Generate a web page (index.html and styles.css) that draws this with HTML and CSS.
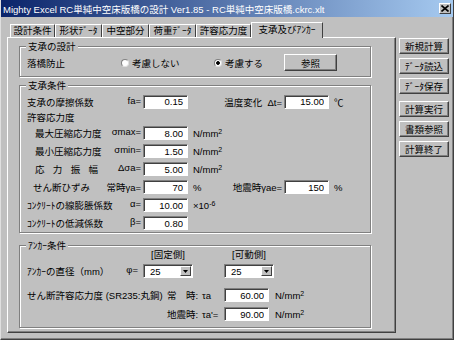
FILE: index.html
```html
<!DOCTYPE html>
<html lang="ja">
<head>
    <meta charset="UTF-8">
    <meta name="viewport" content="width=device-width, initial-scale=1.0">
    <title>Mighty Excel RC単純中空床版橋の設計</title>
    <link rel="stylesheet" href="styles.css">
</head>
<body>
    <div class="window">
        <div class="titlebar">
            <span class="title">Mighty Excel RC単純中空床版橋の設計 Ver1.85 - RC単純中空床版橋.ckrc.xlt</span>
            <span class="close">
                <svg width="8" height="7" viewBox="0 0 8 7"><path d="M0.5 0.5 L7.5 6.5 M7.5 0.5 L0.5 6.5" stroke="#000" stroke-width="1.6"/></svg>
            </span>
        </div>

        <div class="main">
            <div class="tabctl">
                <!-- Tab strip -->
                <div class="tabs">
                    <span class="tab w45">設計条件</span>
                    <span class="tab w47">形状ﾃﾞｰﾀ</span>
                    <span class="tab w47">中空部分</span>
                    <span class="tab w47">荷重ﾃﾞｰﾀ</span>
                    <span class="tab w55">許容応力度</span>
                    <span class="tab active">支承及びｱﾝｶｰ</span>
                </div>

                <div class="page">
                    <!-- 支承の設計 -->
                    <div class="group g1">
                        <div class="group-title">支承の設計</div>
                        <div class="rakkyo">
                            <span class="rk-label">落橋防止</span>
                            <label class="radio r1"><span class="dot"></span>考慮しない</label>
                            <label class="radio r2"><span class="dot on"></span>考慮する</label>
                            <button class="btn ref">参照</button>
                        </div>
                    </div>

                    <!-- 支承条件 -->
                    <div class="group g2">
                        <div class="group-title">支承条件</div>
                        <div class="grid">
                            <div class="k"><span>支承の摩擦係数</span><span>fa=</span></div>
                            <input class="num" type="text" value="0.15">
                            <span></span>
                            <span class="k2">温度変化&nbsp; Δt=</span>
                            <input class="num" type="text" value="15.00">
                            <span class="u2">℃</span>

                            <div class="sub">許容応力度</div>

                            <div class="k in8"><span>最大圧縮応力度</span><span>σmax=</span></div>
                            <input class="num" type="text" value="8.00">
                            <span class="u">N/mm<sup>2</sup></span>
                            <span></span><span></span><span></span>

                            <div class="k in8"><span>最小圧縮応力度</span><span>σmin=</span></div>
                            <input class="num" type="text" value="1.50">
                            <span class="u">N/mm<sup>2</sup></span>
                            <span></span><span></span><span></span>

                            <div class="k in8"><span class="spread">応 力 振 幅</span><span>Δσa=</span></div>
                            <input class="num" type="text" value="5.00">
                            <span class="u">N/mm<sup>2</sup></span>
                            <span></span><span></span><span></span>

                            <div class="k in6"><span>せん断ひずみ</span><span>常時γa=</span></div>
                            <input class="num" type="text" value="70">
                            <span class="u">%</span>
                            <span class="k2">地震時γae=</span>
                            <input class="num" type="text" value="150">
                            <span class="u2">%</span>

                            <div class="k"><span>ｺﾝｸﾘｰﾄの線膨脹係数</span><span>α=</span></div>
                            <input class="num" type="text" value="10.00">
                            <span class="u">×10<sup>-6</sup></span>
                            <span></span><span></span><span></span>

                            <div class="k"><span>ｺﾝｸﾘｰﾄの低減係数</span><span>β=</span></div>
                            <input class="num" type="text" value="0.80">
                            <span></span>
                            <span></span><span></span><span></span>
                        </div>
                    </div>

                    <!-- アンカー条件 -->
                    <div class="group g3">
                        <div class="group-title">ｱﾝｶｰ条件</div>
                        <div class="a-head">
                            <span class="side-name">[固定側]</span>
                            <span class="side-name move">[可動側]</span>
                        </div>
                        <div class="a-row">
                            <div class="a-label"><span>ｱﾝｶｰの直径（mm）</span><span>φ=</span></div>
                            <div class="combo">
                                <span class="val">25</span>
                                <span class="arrow"><svg width="5" height="3" viewBox="0 0 5 3"><path d="M0 0 H5 L2.5 3 Z" fill="#000"/></svg></span>
                            </div>
                            <div class="combo move">
                                <span class="val">25</span>
                                <span class="arrow"><svg width="5" height="3" viewBox="0 0 5 3"><path d="M0 0 H5 L2.5 3 Z" fill="#000"/></svg></span>
                            </div>
                        </div>
                        <div class="s-row first">
                            <span class="s-name">せん断許容応力度 (SR235:丸鋼)</span>
                            <span class="s-when">常　時:</span>
                            <span class="s-sym">τa</span>
                            <input class="num" type="text" value="60.00">
                            <span class="u2">N/mm<sup>2</sup></span>
                        </div>
                        <div class="s-row">
                            <span class="s-name"></span>
                            <span class="s-when">地震時:</span>
                            <span class="s-sym">τa'=</span>
                            <input class="num" type="text" value="90.00">
                            <span class="u2">N/mm<sup>2</sup></span>
                        </div>
                    </div>
                </div>
            </div>

            <!-- Command buttons -->
            <div class="side">
                <button class="btn">新規計算</button>
                <button class="btn">ﾃﾞｰﾀ読込</button>
                <button class="btn">ﾃﾞｰﾀ保存</button>
                <button class="btn gap">計算実行</button>
                <button class="btn">書類参照</button>
                <button class="btn">計算終了</button>
            </div>
        </div>
    </div>
</body>
</html>
```

FILE: styles.css
```css
body {
    margin: 0;
    background-color: #c0c0c0;
    font-family: "Liberation Sans", "Noto Sans CJK JP", sans-serif;
    font-size: 9.5px;
    color: #000;
}
.window {
    width: 454px;
    height: 340px;
    box-sizing: border-box;
    background: #c0c0c0;
    border-left: 1px solid #dfdfdf;
    border-right: 1px solid #404040;
    border-bottom: 1px solid #404040;
    box-shadow: inset -1px -1px 0 #808080;
}
.titlebar {
    height: 17px;
    display: flex;
    align-items: center;
    justify-content: space-between;
    padding-left: 2px;
    background: linear-gradient(to right, #0a246a, #a6caf0);
    color: #fff;
}
.close {
    width: 12px;
    height: 11px;
    box-sizing: border-box;
    margin-right: 2px;
    display: flex;
    align-items: center;
    justify-content: center;
    background: #c0c0c0;
    border: 1px solid;
    border-color: #fff #404040 #404040 #fff;
}
.main {
    display: flex;
    padding-left: 6px;
}
.tabctl {
    width: 389px;
}
.tabs {
    height: 20px;
    display: flex;
    align-items: flex-end;
    padding-left: 3px;
}
.tab {
    height: 13px;
    box-sizing: border-box;
    border-top: 1px solid #fff;
    border-left: 1px solid #fff;
    border-right: 1px solid #404040;
    text-align: center;
    line-height: 12px;
}
.w45 { width: 45px; }
.w47 { width: 47px; }
.w55 { width: 55px; }
.tab.active {
    width: 72px;
    height: 16px;
    margin-bottom: -1px;
    line-height: 13px;
    background: #c0c0c0;
    position: relative;
    z-index: 1;
}
.page {
    height: 296px;
    box-sizing: border-box;
    border-top: 1px solid #fff;
    border-left: 1px solid #fff;
    border-right: 1px solid #404040;
    border-bottom: 1px solid #404040;
    box-shadow: inset -1px -1px 0 #808080;
    padding: 8px 0 0 11px;
}
.group {
    width: 352px;
    box-sizing: border-box;
    border: 1px solid #808080;
    box-shadow: 1px 1px 0 #fff, inset 1px 1px 0 #fff;
    padding-left: 7px;
}
.group-title {
    width: fit-content;
    height: 11px;
    line-height: 11px;
    margin: -6px 0 0 -1px;
    padding: 0 2px;
    background: #c0c0c0;
}
.g1 {
    padding-bottom: 5px;
}
.g2 {
    margin-top: 8px;
}
.g3 {
    margin-top: 12px;
    padding-bottom: 6px;
}
.rakkyo {
    display: flex;
    align-items: center;
    height: 17px;
    margin-top: 2px;
}
.rk-label {
    width: 94px;
}
.radio {
    display: flex;
    align-items: center;
    gap: 3px;
}
.r1 { width: 93px; }
.r2 { width: 70px; }
.dot {
    width: 8px;
    height: 8px;
    box-sizing: border-box;
    border-radius: 50%;
    border: 1px solid;
    border-color: #808080 #e0e0e0 #e0e0e0 #808080;
    background: #fff;
}
.dot.on {
    background: radial-gradient(circle, #000 0 1.5px, #fff 2.2px);
}
.btn {
    box-sizing: border-box;
    margin: 0;
    padding: 0;
    font: inherit;
    color: #000;
    background: #c0c0c0;
    border: 1px solid;
    border-color: #fff #404040 #404040 #fff;
    box-shadow: inset -1px -1px 0 #808080;
}
.ref {
    width: 53px;
    height: 17px;
}
.grid {
    display: grid;
    grid-template-columns: 116px 45px 34px 62px 44px auto;
    grid-template-rows: 17px 14px repeat(6, 18px);
    align-items: center;
    margin-top: 2px;
}
.k {
    display: flex;
    justify-content: space-between;
    padding-right: 2px;
}
.in8 { padding-left: 8px; }
.in6 { padding-left: 6px; }
.spread {
    display: inline-block;
    width: 63px;
    text-align: justify;
    text-align-last: justify;
}
.sub {
    grid-column: 1 / -1;
}
.k2 {
    text-align: right;
    padding-right: 2px;
}
.u {
    padding-left: 5px;
    white-space: nowrap;
}
.u2 {
    padding-left: 6px;
    white-space: nowrap;
}
sup {
    font-size: 7px;
    line-height: 1;
    vertical-align: top;
}
.num {
    width: 45px;
    height: 14px;
    box-sizing: border-box;
    margin: 0;
    padding: 0 4px 0 0;
    border: 1px solid;
    border-color: #808080 #fff #fff #808080;
    box-shadow: inset 1px 1px 0 #404040;
    background: #fff;
    font: inherit;
    color: #000;
    text-align: right;
    outline: none;
}
.a-head {
    display: flex;
    height: 11px;
    line-height: 11px;
    margin-top: -2px;
    padding-left: 116px;
}
.side-name {
    width: 50px;
    text-align: center;
}
.side-name.move {
    margin-left: 31px;
}
.a-row {
    display: flex;
    align-items: center;
    height: 14px;
    margin-top: 4px;
}
.a-label {
    width: 116px;
    display: flex;
    justify-content: space-between;
    padding-right: 5px;
    box-sizing: border-box;
}
.combo {
    width: 50px;
    height: 14px;
    box-sizing: border-box;
    display: flex;
    align-items: center;
    background: #fff;
    border: 1px solid;
    border-color: #808080 #fff #fff #808080;
    box-shadow: inset 1px 1px 0 #404040;
}
.combo.move {
    margin-left: 31px;
}
.combo .val {
    flex: 1;
    padding-left: 6px;
}
.arrow {
    width: 11px;
    height: 10px;
    box-sizing: border-box;
    margin-right: 1px;
    display: flex;
    align-items: center;
    justify-content: center;
    background: #c0c0c0;
    border: 1px solid;
    border-color: #fff #404040 #404040 #fff;
}
.s-row {
    display: flex;
    align-items: center;
    height: 14px;
    margin-top: 5px;
}
.s-row.first {
    margin-top: 10px;
}
.s-name {
    width: 140px;
    white-space: nowrap;
}
.s-when { width: 35px; }
.s-sym { width: 22px; }
.side {
    width: 50px;
    margin-left: 3px;
    padding-top: 21px;
    display: flex;
    flex-direction: column;
    gap: 4px;
}
.side .btn {
    height: 16px;
}
.side .gap {
    margin-top: 3px;
}
```
